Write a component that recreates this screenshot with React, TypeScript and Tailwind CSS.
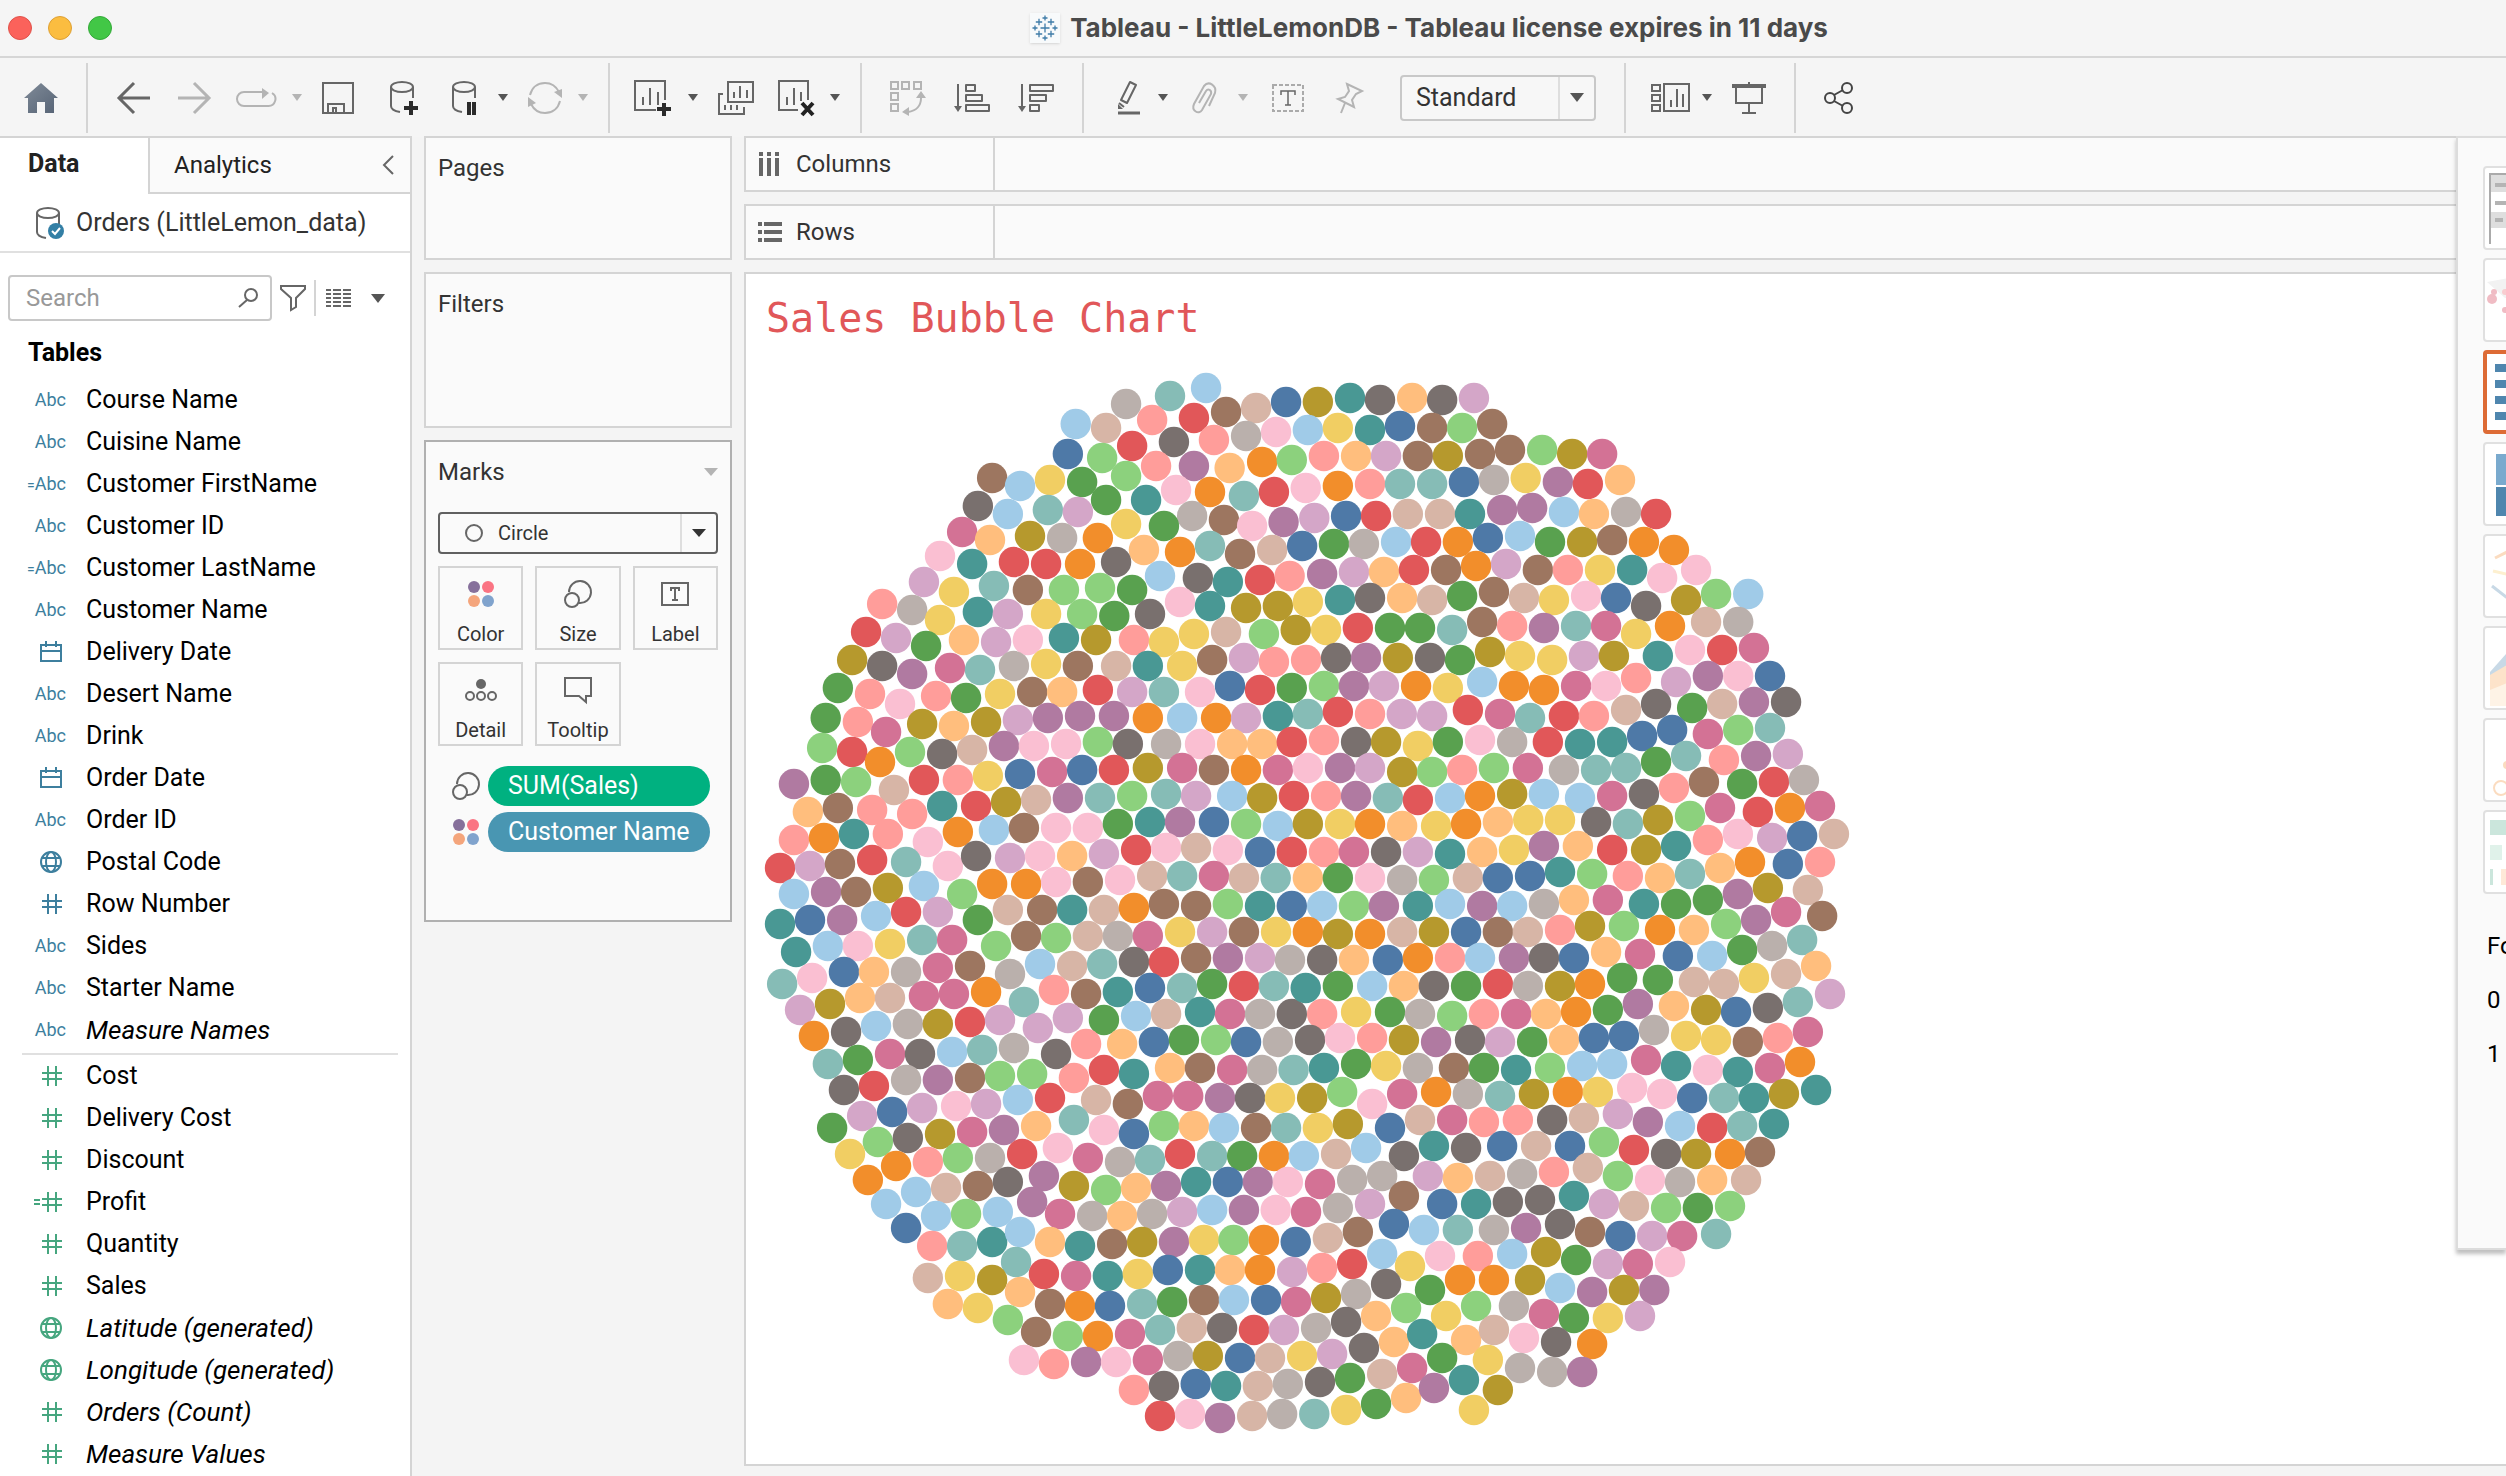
import React from "react";

const palette: Record<string, string> = {
  a: "#4e79a7", b: "#a0cbe8", c: "#f28e2b", d: "#ffbe7d", e: "#59a14f",
  f: "#8cd17d", g: "#b6992d", h: "#f1ce63", i: "#499894", j: "#86bcb6",
  k: "#e15759", l: "#ff9d9a", m: "#79706e", n: "#bab0ac", o: "#d37295",
  p: "#fabfd2", q: "#b07aa1", r: "#d4a6c8", s: "#9d7660", t: "#d7b5a6",
};

/* Bubble marks, one block per region of the view: a palette letter followed by x,y in block units. */
const blocks = [
  {
    x: 0, y: 0,
    marks: `b1305,114 j1204,138 n1081,162 l1154,210 k1271,204 s1361,186 t1445,174 a1529,156 b940,222 t1025,234
p1501,246 n1417,258 l1327,270 m1215,276 k1098,288 a918,312 f1014,324 l1165,348 q1271,348 d1371,354 c1462,336 f1545,330
s706,384 b784,408 h868,390 e958,396 f1081,378 p1221,420 c1316,426 j1411,438 k1495,426
m666,468 b750,492 j862,480 r946,486 e1025,450 i1137,450 n1266,498 s1355,510 p1434,528 q1522,516
o622,546 d700,570 g812,558 n902,564 c1002,564 h1081,522 e1187,528 d1131,600 c1232,606 j1316,588 s1400,612 t1490,600
p560,618 i650,642 k767,636 k857,642 c952,642 m1053,636 b1176,678 m1282,684 i1366,696 k1456,690 l1539,678
r515,696 h599,726 j711,708 s806,720 f907,720 f1008,714 e1098,720 p1232,756 i1316,768 g1417,774 g1506,768
l398,762 n482,780 h560,810 i666,786 r750,792 h857,792 f958,792 e1048,798 m1148,792
k353,846 r437,864 e521,888 d627,870 r717,876 p806,870 i907,864 g997,870 l1103,870 h1187,876 h1271,852 t1361,846 f1467,852 g1556,840
g314,930 m398,948 q482,972 o588,954 j672,960 n767,948 h857,942 s946,948 t1053,948 i1142,948 h1238,948 s1322,930 r1411,924 l1495,936
e274,1014 l364,1032 p448,1062 l549,1038 e633,1044 h728,1032 s818,1026 d902,1026 k1002,1020 r1098,1026 j1187,1026 p1288,1026 a1372,1008 k1456,1020 e1545,1014`,
  },
  {
    x: 560, y: 0,
    marks: `g50,156 i140,144 m224,150 d314,144 m398,150 r487,144
b22,240 h106,234 i196,240 a280,228 s370,234 f454,234 s538,222
l67,318 d157,318 r241,318 s330,318 g414,318 s504,312 s588,300 f678,300 g762,312 o846,312
p16,414 c106,408 l196,402 j280,402 j370,402 a459,396 n543,390 h632,384 q722,396 k806,402 d896,390
r40,504 a129,498 k213,498 t302,492 t392,492 i476,492 q566,480 q650,474 b739,486 d823,492 n913,486 k997,492
a6,588 e95,582 n179,582 b269,576 k353,576 c442,576 a526,564 b616,558 e700,576 g790,576 s874,570 c963,576 c1047,600
q62,672 r151,666 d235,666 k319,660 s409,660 c493,648 r577,642 s666,660 l750,660 h840,660 i930,660 p1014,684 p1109,660
h22,756 i112,750 m196,744 d286,744 t370,750 e454,738 s543,726 t627,744 h711,750 p801,738 a885,744 m969,768 g1081,750 f1165,732 b1255,732
h73,840 k162,834 e252,834 e336,834 j426,840 s510,816 l594,828 q683,834 j773,828 o857,828 h941,852 c1036,828 t1137,816 n1227,816
l17,930 m101,924 q185,924 g274,924 m364,924 e448,930 g532,906 h616,918 h706,930 r795,918 g879,918 i1002,918 p1092,900 k1182,900 o1271,894
f67,1008 q151,1008 r235,1008 c325,1008 h414,1014 b510,996 c599,1008 c683,1020 o773,1008 p857,1008 l941,984 r1053,996 q1142,978 p1227,978 a1316,978
m1361,1056 q1271,1056 t1182,1062 e1098,1074 m997,1062 t913,1080
j22,1092 k106,1086 l196,1092 r285,1092 r370,1098 k470,1080 o560,1092 j644,1104 k739,1098 l823,1098`,
  },
  {
    x: 0, y: 350,
    marks: `e240,54 l330,66 o409,96 g510,72 d599,78 g689,66 r778,60 q862,54 q952,48 q1047,48 c1142,54 b1238,54 c1333,54 r1417,54 i1506,48
f230,144 k314,156 c392,186 f476,156 m566,162 t650,150 q739,138 p823,138 p913,132 f1002,126 m1086,132 n1193,132 p1288,132 d1378,132 d1462,132 k1545,126
q151,252 e240,240 f325,246 t431,270 k515,240 l610,240 h694,228 a784,222 o874,216 a958,210 k1047,210 g1142,204 o1238,204 s1327,210 c1417,210 o1506,210
d190,336 s274,324 l370,330 l482,342 i566,318 k661,318 g745,306 t829,300 q918,294 j1008,294 f1098,288 j1193,282 r1277,288 b1378,288 g1462,294 k1551,288
l151,420 c235,414 i319,402 l414,402 p526,426 c610,396 b711,390 s795,384 p885,384 p974,384 e1058,372 i1148,366 q1232,366 a1327,366 f1417,372 b1506,378
k112,504 r196,498 s280,492 k370,480 j465,486 p582,498 m661,468 r756,474 p840,468 d930,468 r1019,462 k1109,450 p1193,444 t1277,444 p1366,450 a1456,456 k1545,456
b151,582 q241,576 s325,576 g414,564 b515,558 f622,582 c706,552 c801,552 p885,546 s974,546 p1064,540 t1154,528 j1238,528 o1327,528 t1411,534 j1500,534
i112,672 a196,660 q286,660 b381,648 k465,636 r554,636 e666,660 t750,630 s846,630 i930,630 t1019,630 c1103,624 s1187,612 s1277,618 f1366,612 i1456,618 a1545,618
i157,756 b246,738 p330,738 h420,732 j510,720 o594,720 f717,738 s801,708 f885,714 t974,708 n1058,708 o1142,708 h1232,696 r1322,696 s1411,696 h1501,696
j118,852 p202,834 a291,816 d375,816 n465,816 o554,804 s644,798 n756,822 b840,792 t930,798 j1014,792 m1103,786 k1187,786 s1277,774 q1366,774 r1456,774 n1540,780
r168,930 g252,912 d336,894 t420,894 o515,888 o599,882 c689,876 j795,906 l879,870 s969,882 i1058,876 a1148,864 j1238,864 e1322,852 k1411,858 j1495,858
c207,1008 m297,996 b381,978 n470,972 g554,972 k644,966 r728,960 r834,984 r918,954 e1019,960 b1109,948 t1193,942 i1288,936 o1372,942 n1456,942 m1545,942
j246,1092 e330,1080 o420,1062 m504,1062 b594,1056 j678,1050 n767,1044 m885,1062 l969,1032 d1070,1032 a1159,1026 e1243,1020 f1333,1020 a1417,1026 n1506,1026`,
  },
  {
    x: 560, y: 350,
    marks: `l67,120 m157,126 g241,126 h330,138 e414,126 p504,120 n594,126 k694,126 i784,132 i874,126 a958,108 a1042,90 o1142,102 f1227,90 j1316,84
p22,204 q112,204 r196,204 g286,216 f370,216 l454,210 f543,204 o638,204 n739,210 j829,210 j913,204 e997,186 j1081,168 l1187,180 q1277,168 r1366,162
l73,288 q157,288 j246,294 k330,300 b420,294 c504,288 g594,282 b683,282 b784,294 o874,288 m963,282 l1047,264 s1131,246 e1238,252 k1327,246 n1411,240
g22,372 h112,372 c196,372 d286,378 h381,378 c465,372 d554,366 h639,360 h728,360 m829,366 j918,372 g1002,360 f1092,348 o1176,324 k1282,336 c1372,324 o1456,318
l67,456 o151,456 m241,456 r330,456 i420,462 d510,456 h599,450 q683,438 d778,438 k874,450 g969,450 i1053,438 l1142,420 p1226,402 r1322,414 a1406,408 t1495,402
d22,534 e106,534 p196,534 n286,540 f375,540 t470,534 a554,534 a644,528 i728,516 f818,522 l918,528 d1008,534 j1092,522 d1176,504 c1260,486 a1366,492 l1456,486
b62,618 f151,618 q235,618 i330,618 b420,612 q510,618 b594,618 n683,612 d767,600 o862,600 i963,612 e1053,612 e1142,600 q1226,582 g1310,564 t1422,570
c22,696 g106,702 c196,702 t286,696 g375,696 a465,696 s554,696 t638,696 l728,690 g812,678 f907,678 c1008,690 d1103,690 f1193,672 q1277,660 o1361,636 s1462,648
m62,780 d151,780 a246,780 c330,774 l420,774 b504,774 q599,774 m683,774 a767,774 d857,756 o952,762 a1058,768 b1154,768 e1238,750 n1322,738 j1406,720
i16,864 e106,858 b202,858 d291,858 m375,858 e465,858 k554,852 n638,858 g728,858 c812,852 e902,834 e1002,840 t1103,846 t1187,852 h1271,834 t1361,822 d1445,798
l62,942 h157,936 e252,936 n336,942 f426,948 l515,942 o605,942 d689,942 c773,936 e862,930 q946,912 d1047,918 g1137,930 a1221,936 m1310,924 j1394,906 r1484,882
m28,1020 p112,1014 l202,1014 g291,1020 q381,1026 m476,1020 r560,1026 e650,1026 d739,1020 a823,1014 a907,1008 n991,990 h1081,1008 h1165,1020 s1254,1026 l1338,1014 o1422,996
i67,1104 e157,1092 h241,1098 n330,1104 s431,1104 e515,1104 i605,1110 f700,1104 b790,1098 b874,1092 o969,1080 i1053,1098 p1142,1110 i1226,1116 o1316,1104 c1400,1086`,
  },
  {
    x: 0, y: 710,
    marks: `k1019,30 i1103,42 l935,54 d1204,24 s1288,24 o1378,30 n1462,30 j1550,30
m291,90 k375,78 n465,60 q554,60 s644,54 f728,48 f818,42
r342,168 a426,156 r510,144 p605,138 r689,132 b778,120 k868,114 t997,120 s1086,132 o1170,108 o1255,108 q1344,114 m1428,114 h1512,114
e258,204 f386,246 m470,234 g560,222 o650,216 q739,210 d829,198 j935,180 p1019,210 a1103,222 f1187,198 d1271,198 b1355,204 s1445,204 j1529,204
h308,282 c437,318 l526,306 f610,294 n700,294 k790,282 p890,264 o974,294 n1064,306 j1148,300 k1232,282 j1322,288 e1406,288 c1495,288
c358,360 b493,396 t577,384 s666,378 m750,366 q851,348 g935,378 f1025,390 d1109,384 q1193,378 i1277,366 a1366,366 q1450,366 p1534,366
b409,432 b549,468 f633,462 b722,456 q818,426 o896,462 n986,468 d1070,468 n1154,462 r1238,456 b1322,450 q1411,450 p1500,450
a465,504 l538,558 j622,558 i706,546 b784,516 d868,546 i952,558 s1042,552 g1126,546 q1215,546 h1299,540 f1382,540 c1467,540 a1556,546
j773,606 t526,654 h616,648 g706,660 k851,642 o941,648 i1030,648 h1114,642 a1198,630 i1288,630 d1372,630 c1456,630 r1546,636
d582,732 h666,744 d784,696 s868,732 c952,738 a1036,738 j1126,732 e1210,726 s1299,720 b1383,720 a1473,720 o1557,726
f750,780 s829,816 f918,828 c1002,828 o1092,822 j1176,810 t1265,804 m1350,804 k1439,810 r1523,810
p795,900 l879,912 q969,906 p1053,906 o1142,900 n1227,888 g1310,888 a1400,894 t1484,894 h1574,888
l1103,990 m1187,978 a1276,972 i1361,978 t1450,978 n1534,972
k1176,1068 p1260,1062 q1344,1074 t1434,1068 n1518,1062`,
  },
  {
    x: 560, y: 710,
    marks: `g34,114 f118,96 p202,132 o286,102 c381,96 n470,102 j560,108 g655,102 c750,96 h834,96 p930,84 p1014,102 a1098,114 j1187,114 i1271,114 g1355,102 i1445,90
h50,204 g134,192 a252,204 t336,180 o426,180 l515,186 l610,180 m706,180 t795,174 r890,162 q974,186 b1064,198 k1154,204 j1238,198 i1327,192
b11,288 t101,282 b185,264 m291,288 i375,258 m465,264 a566,258 t661,258 a756,258 f851,246 k935,270 m1025,282 g1109,282 c1204,282 s1288,276
o56,372 n146,360 n230,348 r358,348 d442,354 t532,348 n622,342 l711,336 t806,324 f890,348 p980,360 n1064,366 d1154,360 t1249,360
o17,456 n106,444 r196,432 s291,408 a398,432 i493,432 m582,426 m672,420 i767,408 r851,432 t935,438 f1025,444 e1114,444 f1204,438
t78,534 s162,516 a263,492 b347,510 j442,510 n543,510 q633,504 m728,492 s812,516 a897,528 r986,528 o1070,528 j1165,522
l62,624 k146,612 b230,582 h308,618 p392,588 l498,588 b594,582 g689,576 e773,600 r862,612 o946,612 p1036,606
g73,714 n157,702 m241,672 e364,690 c448,660 c543,660 g644,660 b728,684 q818,696 g907,690 q992,690
n45,804 m129,786 d213,768 f297,744 h409,768 f493,738 n599,738 o683,762 e767,774 h862,774 r952,768
r90,882 m179,864 d263,846 i342,822 d465,840 t543,810 p627,834 m717,846 c818,852
m56,966 e140,954 t230,942 o314,924 e398,894 h526,900 n616,924 n706,936 q790,936
j40,1062 h129,1050 e213,1032 d297,1014 q375,984 i459,960 g554,990 h487,1050`,
  },
];

function BubbleChart() {
  return (
    <svg width="1120" height="1100" viewBox="0 0 1120 1100" role="img" aria-label="Sales by customer">
      {blocks.map((block, n) =>
        block.marks.split(/\s+/).map((mark, k) => {
          const [mx, my] = mark.slice(1).split(",").map(Number);
          return (
            <circle key={`${n}-${k}`} cx={block.x + mx / 2.8} cy={block.y + my / 3} r="15.2" fill={palette[mark[0]]} />
          );
        })
      )}
    </svg>
  );
}

type SvgProps = { w: number; h: number; color?: string; sw?: number; children: React.ReactNode };
function Svg({ w, h, color = "#666666", sw = 2, children }: SvgProps) {
  return (
    <svg width={w} height={h} viewBox={`0 0 ${w} ${h}`} fill="none" stroke={color} strokeWidth={sw} className="shrink-0 overflow-visible" aria-hidden="true">
      {children}
    </svg>
  );
}

const GRAY = "#b4b4b4";

function Tool({ label, className, children }: { label: string; className: string; children: React.ReactNode }) {
  return (
    <button type="button" aria-label={label} className={`flex shrink-0 items-center justify-center ${className}`}>
      {children}
    </button>
  );
}

function Caret({ w = 10, h = 7, color = "#555555" }: { w?: number; h?: number; color?: string }) {
  return (
    <svg width={w} height={h} viewBox="0 0 10 7" preserveAspectRatio="none" className="shrink-0" aria-hidden="true">
      <path d="M0 0H10L5 7Z" fill={color} />
    </svg>
  );
}

function Sep({ className }: { className: string }) {
  return <span className={`h-[70px] w-0.5 shrink-0 bg-[#d4d4d4] ${className}`} />;
}

const cylinder = (
  <>
    <ellipse cx="12" cy="6" rx="11" ry="5" />
    <path d="M1 6V25C1 28 4 30 10 31M23 6V17" />
  </>
);

function Toolbar() {
  return (
    <div className="flex h-[79px] items-center bg-[#f5f5f5]" role="toolbar" aria-label="Main toolbar">
      <Tool label="Home" className="ml-6">
        <svg width="34" height="30" viewBox="0 0 34 30" aria-hidden="true">
          <defs>
            <linearGradient id="homeFill" x1="0" y1="0" x2="1" y2="1">
              <stop offset="0" stopColor="#808b98" />
              <stop offset="1" stopColor="#566375" />
            </linearGradient>
          </defs>
          <path d="M17 0L34 15H30V30H21V19H13V30H4V15H0Z" fill="url(#homeFill)" />
        </svg>
      </Tool>
      <Sep className="ml-7" />
      <Tool label="Back" className="ml-7">
        <Svg w={34} h={32} sw={3}><path d="M18 1L3 16L18 31M3 16H34" /></Svg>
      </Tool>
      <Tool label="Forward" className="ml-7">
        <Svg w={34} h={32} sw={3} color={GRAY}><path d="M16 1L31 16L16 31M31 16H0" /></Svg>
      </Tool>
      <Tool label="Redo" className="ml-6">
        <Svg w={40} h={20} color={GRAY}>
          <path d="M26 4H8A7 7 0 0 0 8 18H32A7 7 0 0 0 36 5" />
          <path d="M26 0L33 5L26 11Z" fill={GRAY} stroke="none" />
        </Svg>
      </Tool>
      <Tool label="Redo options" className="ml-4"><Caret color={GRAY} /></Tool>
      <Tool label="Save" className="ml-5">
        <Svg w={32} h={32}><path d="M1 1H31V31H1ZM6 31V22H22V31M11 31V26H14V31" /></Svg>
      </Tool>
      <Tool label="New data source" className="ml-9">
        <Svg w={30} h={34}>{cylinder}<path d="M21 20V34M14 27H28" stroke="#2b2b2b" strokeWidth="4" /></Svg>
      </Tool>
      <Tool label="Pause auto updates" className="ml-8">
        <Svg w={26} h={34}>{cylinder}<path d="M17 21V34M22 21V34" stroke="#2b2b2b" strokeWidth="4" /></Svg>
      </Tool>
      <Tool label="Pause options" className="ml-5"><Caret /></Tool>
      <Tool label="Refresh" className="ml-5">
        <Svg w={34} h={32} color={GRAY}>
          <path d="M2 13C4 5 10 1 17 1C23 1 28 4 31 10M32 19C30 27 24 31 17 31C11 31 6 28 3 22" />
          <path d="M26 10L34 7V16ZM0 15L8 21L0 25Z" fill={GRAY} stroke="none" />
        </Svg>
      </Tool>
      <Tool label="Refresh options" className="ml-4"><Caret color={GRAY} /></Tool>
      <Sep className="ml-5" />
      <Tool label="New worksheet" className="ml-6">
        <Svg w={38} h={36}>
          <path d="M22 30H1V1H31V20M9 25V17M16 25V8M24 25V12" />
          <path d="M30 23V36M23 29H37" stroke="#2b2b2b" strokeWidth="4" />
        </Svg>
      </Tool>
      <Tool label="New worksheet options" className="ml-4"><Caret /></Tool>
      <Tool label="Duplicate" className="ml-5">
        <Svg w={36} h={34}>
          <path d="M10 1H35V21H10ZM16 17V11M22 17V5M29 17V9M5 13H1V33H26V26M7 29V24M13 29V24M19 29V24" />
        </Svg>
      </Tool>
      <Tool label="Clear sheet" className="ml-6">
        <Svg w={36} h={36}>
          <path d="M20 30H1V1H30V20M9 25V17M16 25V8M23 21V12" />
          <path d="M24 23L35 35M35 23L24 35" stroke="#222222" strokeWidth="4" />
        </Svg>
      </Tool>
      <Tool label="Clear options" className="ml-4"><Caret /></Tool>
      <Sep className="ml-5" />
      <Tool label="Swap rows and columns" className="ml-7">
        <Svg w={36} h={36} color={GRAY}>
          <path d="M1 2H8V9H1ZM12 2H19V9H12ZM24 2H31V9H24ZM1 13H8V20H1ZM1 24H8V31H1ZM31 18C31 26 26 31 18 32" />
          <path d="M26 18L31 11L36 18ZM19 27V36L12 32Z" fill={GRAY} stroke="none" />
        </Svg>
      </Tool>
      <Tool label="Sort ascending" className="ml-7">
        <Svg w={36} h={28}>
          <path d="M4 0V24M12 1H21V7H12ZM12 11H28V17H12ZM12 21H35V27H12Z" strokeLinejoin="round" />
          <path d="M0 22H8L4 28Z" fill="#666666" stroke="none" />
        </Svg>
      </Tool>
      <Tool label="Sort descending" className="ml-7">
        <Svg w={36} h={28}>
          <path d="M4 0V24M12 1H35V7H12ZM12 11H28V17H12ZM12 21H21V27H12Z" strokeLinejoin="round" />
          <path d="M0 22H8L4 28Z" fill="#666666" stroke="none" />
        </Svg>
      </Tool>
      <Sep className="ml-7" />
      <Tool label="Highlight" className="ml-8">
        <Svg w={26} h={34}>
          <path d="M14 1L20 4L11 22L5 19ZM3 22L8 26" strokeLinejoin="round" />
          <path d="M2 23L7 28H2Z" fill="#666666" stroke="none" />
          <path d="M2 32H24" strokeWidth="3" />
        </Svg>
      </Tool>
      <Tool label="Highlight options" className="ml-4"><Caret /></Tool>
      <Tool label="Group members" className="ml-6">
        <Svg w={26} h={32} color={GRAY}>
          <path d="M17 24L23 11C25 4 17 -2 12 4L2 22C-1 29 7 33 10 28L19 12C20 8 16 6 14 9L7 21" />
        </Svg>
      </Tool>
      <Tool label="Group options" className="ml-5"><Caret color={GRAY} /></Tool>
      <Tool label="Show mark labels" className="ml-6">
        <Svg w={32} h={28} color="#aaaaaa">
          <rect x="1" y="1" width="30" height="26" strokeDasharray="4 2" />
          <path d="M9 11V7H23V11M16 7V21M13 21H19" stroke="#666666" strokeWidth="1.5" />
        </Svg>
      </Tool>
      <Tool label="Fix axes" className="ml-8">
        <Svg w={28} h={32} color={GRAY}>
          <path d="M11 2L26 9L20 12L16 18L18 25L2 17L9 15L13 9ZM9 21L5 31" />
        </Svg>
      </Tool>
      <div className="relative ml-9 h-[46px] w-[196px] shrink-0">
        <select aria-label="Fit" className="h-full w-full appearance-none rounded-sm border-2 border-[#c8c8c8] bg-[#f7f7f7] pl-3.5 text-[25px] text-[#333333]">
          <option>Standard</option>
        </select>
        <span className="pointer-events-none absolute inset-y-0.5 right-0.5 flex w-9 items-center justify-center border-l-2 border-[#dedede]">
          <Caret w={14} h={9} />
        </span>
      </div>
      <Sep className="ml-7" />
      <Tool label="Show cards" className="ml-6">
        <Svg w={40} h={30}>
          <path d="M2 2H10V8H2ZM2 12H10V18H2ZM2 22H10V28H2ZM14 1H39V28H14ZM21 24V17M27 24V6M33 24V11" />
        </Svg>
      </Tool>
      <Tool label="Card options" className="ml-3"><Caret /></Tool>
      <Tool label="Presentation mode" className="ml-5">
        <Svg w={34} h={32}>
          <path d="M17 0V3M4 5V21H30V5M17 21V31M10 31H24" />
          <path d="M0 4H34" strokeWidth="4" />
        </Svg>
      </Tool>
      <Sep className="ml-7" />
      <Tool label="Share" className="ml-7">
        <Svg w={30} h={32} color="#444444">
          <circle cx="6" cy="16" r="5" /><circle cx="23" cy="6" r="5" /><circle cx="23" cy="26" r="5" />
          <path d="M10 13L19 8M10 19L19 24" />
        </Svg>
      </Tool>
    </div>
  );
}

function PlusMark({ x, y, s }: { x: number; y: number; s: number }) {
  return <path d={`M${x - s} ${y}H${x + s}M${x} ${y - s}V${y + s}`} />;
}

function TitleBar() {
  return (
    <header className="flex h-[58px] items-center border-b-2 border-[#d6d6d6] bg-[#f5f5f5] pl-2">
      <div className="mr-[344px] flex flex-1 gap-4">
        <button type="button" aria-label="Close" className="size-6 rounded-full border border-[#e0524a] bg-[#fb625b]" />
        <button type="button" aria-label="Minimize" className="size-6 rounded-full border border-[#dea034] bg-[#fbbd40]" />
        <button type="button" aria-label="Zoom" className="size-6 rounded-full border border-[#33a938] bg-[#42c746]" />
      </div>
      <h1 className="flex items-center gap-2.5 font-['Inter'] text-[26px] leading-9 font-bold whitespace-nowrap text-[#4a4a4a]">
        <svg width="30" height="30" viewBox="0 0 30 30" className="bg-[#f8fafb] shadow" stroke="#3f7ca8" strokeWidth="1.3" aria-hidden="true">
          <PlusMark x={15} y={15} s={4.5} />
          <PlusMark x={15} y={5} s={2.5} />
          <PlusMark x={15} y={25} s={2.5} />
          <PlusMark x={5} y={15} s={2.5} />
          <PlusMark x={25} y={15} s={2.5} />
          <PlusMark x={9} y={9} s={3.2} />
          <PlusMark x={21} y={9} s={3.2} />
          <PlusMark x={9} y={21} s={3.2} />
          <PlusMark x={21} y={21} s={3.2} />
        </svg>
        Tableau - LittleLemonDB - Tableau license expires in 11 days
      </h1>
      <div className="flex-1" />
    </header>
  );
}

type Field = { name: string; kind: "abc" | "date" | "geo" | "num"; calc?: boolean; italic?: boolean };
const dimensions: Field[] = [
  { name: "Course Name", kind: "abc" },
  { name: "Cuisine Name", kind: "abc" },
  { name: "Customer FirstName", kind: "abc", calc: true },
  { name: "Customer ID", kind: "abc" },
  { name: "Customer LastName", kind: "abc", calc: true },
  { name: "Customer Name", kind: "abc" },
  { name: "Delivery Date", kind: "date" },
  { name: "Desert Name", kind: "abc" },
  { name: "Drink", kind: "abc" },
  { name: "Order Date", kind: "date" },
  { name: "Order ID", kind: "abc" },
  { name: "Postal Code", kind: "geo" },
  { name: "Row Number", kind: "num" },
  { name: "Sides", kind: "abc" },
  { name: "Starter Name", kind: "abc" },
  { name: "Measure Names", kind: "abc", italic: true },
];
const measures: Field[] = [
  { name: "Cost", kind: "num" },
  { name: "Delivery Cost", kind: "num" },
  { name: "Discount", kind: "num" },
  { name: "Profit", kind: "num", calc: true },
  { name: "Quantity", kind: "num" },
  { name: "Sales", kind: "num" },
  { name: "Latitude (generated)", kind: "geo", italic: true },
  { name: "Longitude (generated)", kind: "geo", italic: true },
  { name: "Orders (Count)", kind: "num", italic: true },
  { name: "Measure Values", kind: "num", italic: true },
];

function FieldIcon({ kind, calc, color }: { kind: Field["kind"]; calc?: boolean; color: string }) {
  if (kind === "abc")
    return (
      <span className="text-lg text-[#3d7f9e]">
        {calc && <span className="text-sm">=</span>}Abc
      </span>
    );
  if (kind === "date")
    return (
      <span className="mr-1">
        <Svg w={22} h={22} color={color}><path d="M1 4H21V20H1ZM1 10H21M6 0V6M16 0V6" /></Svg>
      </span>
    );
  if (kind === "geo")
    return (
      <span className="mr-1">
        <Svg w={22} h={22} color={color}>
          <circle cx="11" cy="11" r="10" /><ellipse cx="11" cy="11" rx="5" ry="10" /><path d="M2 7H20M2 15H20" />
        </Svg>
      </span>
    );
  return (
    <span className="mr-1">
      <Svg w={calc ? 28 : 20} h={20} color={color}>
        <g transform={calc ? "translate(8 0)" : undefined}><path d="M6 0V20M14 0V20M0 7H20M0 13H20" /></g>
        {calc && <path d="M0 8H6M0 12H6" />}
      </Svg>
    </span>
  );
}

function FieldList({ fields, color, label }: { fields: Field[]; color: string; label: string }) {
  return (
    <ul aria-label={label}>
      {fields.map((f) => (
        <li key={f.name} className="flex h-[42px] items-center gap-5 leading-8 text-black">
          <span className="flex w-[66px] shrink-0 justify-end">
            <FieldIcon kind={f.kind} calc={f.calc} color={color} />
          </span>
          <span className={f.italic ? "text-[26px] italic" : "text-[25px]"}>{f.name}</span>
        </li>
      ))}
    </ul>
  );
}

function DataPane() {
  return (
    <aside className="flex w-[412px] shrink-0 flex-col border-t-2 border-r-2 border-[#d4d4d4] bg-white">
      <div role="tablist" className="flex h-14 text-[#222222]">
        <button role="tab" aria-selected="true" className="w-[148px] pb-1 pl-7 text-left text-[25px] font-bold">Data</button>
        <button role="tab" aria-selected="false" className="flex flex-1 items-center justify-between border-b-2 border-l-2 border-[#d4d4d4] bg-[#fafafa] pr-4 pl-6 text-2xl">
          Analytics
          <Svg w={12} h={18}><path d="M11 0L2 9L11 18" /></Svg>
        </button>
      </div>
      <button type="button" className="flex h-[59px] items-center gap-3 border-b-2 border-[#e0e0e0] pl-9 text-[25px] leading-8 whitespace-nowrap text-[#333333]">
        <Svg w={28} h={32}>
          {cylinder}
          <circle cx="20" cy="24" r="8" fill="#337fa5" stroke="none" />
          <path d="M16 24L19 27L24 21" stroke="#ffffff" />
        </Svg>
        Orders (LittleLemon_data)
      </button>
      <div className="mt-5.5 flex items-center pl-2">
        <label className="relative block w-[264px]">
          <input type="text" aria-label="Search fields" placeholder="Search" className="h-[46px] w-full rounded-sm border-2 border-[#c8c8c8] bg-white pl-4 text-2xl placeholder:text-[#999999]" />
          <span className="pointer-events-none absolute inset-y-0 right-3.5 flex items-center">
            <Svg w={20} h={20}><circle cx="13" cy="7" r="6" /><path d="M9 12L1 19" /></Svg>
          </span>
        </label>
        <button type="button" aria-label="Filter fields" className="ml-2">
          <Svg w={26} h={26}><path d="M1 1H25V4L16 13V22L11 25V13L1 4Z" /></Svg>
        </button>
        <span className="ml-2 h-9 w-0.5 bg-[#d4d4d4]" />
        <button type="button" aria-label="View options" className="ml-2.5 flex items-center gap-5">
          <Svg w={25} h={20} sw={2}>
            <path d="M0 2H25M0 6H25M0 10H25M0 14H25M0 18H25" strokeDasharray="5 2 8 2 8" />
          </Svg>
          <Caret w={14} h={9} />
        </button>
      </div>
      <h2 className="mt-3 mb-1.5 pl-7 text-[25px] leading-10 font-bold text-black">Tables</h2>
      <FieldList fields={dimensions} color="#3d7f9e" label="Dimensions" />
      <hr className="mt-0.5 mr-3 ml-[22px] border-t-2 border-[#e0e0e0]" />
      <FieldList fields={measures} color="#46a67f" label="Measures" />
    </aside>
  );
}

function SizeIcon() {
  return (
    <Svg w={28} h={28}>
      <path d="M5 12A11 11 0 1 1 15 23" />
      <circle cx="8" cy="20" r="7" />
    </Svg>
  );
}
function ColorIcon() {
  return (
    <svg width="28" height="28" viewBox="0 0 28 28" className="shrink-0" aria-hidden="true">
      <circle cx="7" cy="7" r="6" fill="#86709b" /><circle cx="21" cy="7" r="6" fill="#fa7483" />
      <circle cx="7" cy="21" r="6" fill="#f4a57c" /><circle cx="21" cy="21" r="6" fill="#80a3cd" />
    </svg>
  );
}

function MarkButton({ label, children }: { label: string; children: React.ReactNode }) {
  return (
    <button type="button" className="flex h-[84px] flex-col items-center justify-between border-2 border-[#d4d4d4] bg-[#fafafa] pt-3 text-xl text-[#333333]">
      {children}
      {label}
    </button>
  );
}

function Cards() {
  return (
    <section className="ml-3 flex w-[308px] shrink-0 flex-col gap-3 text-2xl text-[#333333]">
      <div className="h-[124px] border-2 border-[#d4d4d4] bg-[#fafafa] px-3 py-3.5">
        <h2>Pages</h2>
      </div>
      <div className="h-[156px] border-2 border-[#d4d4d4] bg-[#fafafa] px-3 py-3.5">
        <h2>Filters</h2>
      </div>
      <div className="h-[482px] border-2 border-[#b0b0b0] bg-[#fafafa] px-3 py-3.5">
        <div className="flex items-center justify-between">
          <h2>Marks</h2>
          <Caret w={14} h={8} color={GRAY} />
        </div>
        <div className="relative mt-6 h-[42px]">
          <select aria-label="Mark type" className="h-full w-full appearance-none rounded-sm border-2 border-[#606060] bg-[#fafafa] pl-[58px] text-xl">
            <option>Circle</option>
          </select>
          <span className="pointer-events-none absolute inset-y-0 left-7 flex items-center">
            <Svg w={18} h={18}><circle cx="8" cy="9" r="8" /></Svg>
          </span>
          <span className="pointer-events-none absolute inset-y-0.5 right-0.5 flex w-9 items-center justify-center border-l-2 border-[#dedede]">
            <Caret w={14} h={8} color="#333333" />
          </span>
        </div>
        <div className="mt-3 grid grid-cols-3 gap-3">
          <MarkButton label="Color"><ColorIcon /></MarkButton>
          <MarkButton label="Size"><SizeIcon /></MarkButton>
          <MarkButton label="Label">
            <Svg w={28} h={28}>
              <rect x="1" y="3" width="26" height="22" />
              <path d="M10 11V8H18V11M14 8V20M11 20H17" />
            </Svg>
          </MarkButton>
          <MarkButton label="Detail">
            <Svg w={32} h={28}>
              <circle cx="16" cy="8" r="5" fill="#666666" stroke="none" />
              <circle cx="5" cy="20" r="4" /><circle cx="16" cy="20" r="4" /><circle cx="27" cy="20" r="4" />
            </Svg>
          </MarkButton>
          <MarkButton label="Tooltip">
            <Svg w={28} h={28}><path d="M1 2H27V20H22V26L15 20H1Z" /></Svg>
          </MarkButton>
        </div>
        <ul className="mt-5 flex flex-col gap-1.5 pr-2 text-[25px]">
          <li className="flex items-center gap-2 pl-3.5">
            <SizeIcon />
            <span className="flex h-10 flex-1 items-center rounded-full bg-[#00b180] pl-5 text-white">SUM(Sales)</span>
          </li>
          <li className="flex items-center gap-2 pl-3.5">
            <ColorIcon />
            <span className="flex h-10 flex-1 items-center rounded-full bg-[#4996b2] pl-5 whitespace-nowrap text-white">Customer Name</span>
          </li>
        </ul>
      </div>
    </section>
  );
}

function Shelf({ label, children }: { label: string; children: React.ReactNode }) {
  return (
    <div className="flex h-14 border-2 border-r-0 border-[#d4d4d4] bg-[#fafafa] text-2xl text-[#333333]">
      <div className="flex w-[249px] items-center border-r-2 border-[#d4d4d4] pl-3">
        <span className="flex w-[38px]">{children}</span>
        {label}
      </div>
    </div>
  );
}

function View() {
  return (
    <main className="ml-3 flex min-w-0 flex-1 flex-col gap-3 pb-2.5">
      <Shelf label="Columns">
        <Svg w={22} h={24} sw={4}><path d="M3 0V4M11 0V4M19 0V4M3 6V24M11 6V24M19 6V24" /></Svg>
      </Shelf>
      <Shelf label="Rows">
        <Svg w={24} h={20} sw={4}><path d="M0 2H4M0 10H4M0 18H4M6 2H24M6 10H24M6 18H24" /></Svg>
      </Shelf>
      <div className="flex-1 border-2 border-r-0 border-[#d4d4d4] bg-white pt-4">
        <h2 className="mb-1 pl-5 font-['DejaVu_Sans_Mono'] text-[40px] leading-[56px] text-[#e15759]">Sales Bubble Chart</h2>
        <div className="-ml-1.5 h-[1100px] w-[1120px]">
          <BubbleChart />
        </div>
      </div>
    </main>
  );
}

function Thumb({ label, selected, children }: { label: string; selected?: boolean; children: React.ReactNode }) {
  return (
    <button
      type="button"
      aria-label={label}
      className={selected ? "h-[84px] w-24 rounded-sm border-4 border-[#dd6b35] bg-white" : "h-[84px] w-24 rounded-sm border-2 border-[#e0e0e0] bg-white"}
    >
      <svg width="80" height="76" viewBox="0 0 80 76" aria-hidden="true">{children}</svg>
    </button>
  );
}

function ShowMe() {
  return (
    <aside className="absolute top-0 right-0 h-[1114px] w-[50px] overflow-hidden border-y-2 border-l-2 border-[#dcdcdc] bg-[#fafafa] pt-7 pl-[25px] text-2xl text-black shadow-[0_4px_4px_rgba(0,0,0,0.25)]">
      <div className="flex w-24 flex-col gap-2">
        <Thumb label="Text table">
          <path d="M5 74V4H80" fill="none" stroke="#aaaaaa" strokeWidth="2" />
          <path d="M6 5H80V22H6ZM6 42H80V58H6Z" fill="#dedede" />
          <path d="M10 15H80M10 33H80M10 50H18" stroke="#b4b4b4" strokeWidth="4" />
        </Thumb>
        <Thumb label="Map">
          <path d="M2 20L24 16L40 20V34L20 36Z" fill="#f2f2f2" />
          <circle cx="7" cy="37" r="5" fill="#f0bcc4" /><circle cx="9" cy="30" r="3" fill="#f0bcc4" /><circle cx="20" cy="30" r="3" fill="#f8cdd0" /><circle cx="20" cy="48" r="3" fill="#f0bcc4" />
        </Thumb>
        <Thumb label="Horizontal bars" selected>
          <path d="M8 14H80M8 30H80M8 46H80M8 62H80" stroke="#4f86ae" strokeWidth="8" />
        </Thumb>
        <Thumb label="Treemap">
          <path d="M11 8H80V39H11Z" fill="#7aaace" /><path d="M11 41H80V70H11Z" fill="#4f86ae" />
        </Thumb>
        <Thumb label="Lines">
          <path d="M10 20L30 10" stroke="#fbdcc0" strokeWidth="3" /><path d="M8 33L30 38" stroke="#fdf0d0" strokeWidth="3" /><path d="M7 48L30 66" stroke="#c8d9e6" strokeWidth="3" />
        </Thumb>
        <Thumb label="Area">
          <path d="M5 42L30 14V50H5Z" fill="#c8d9e6" /><path d="M5 45L30 30V60H5Z" fill="#fde3ca" /><path d="M5 60L30 50V76H5Z" fill="#fef3e6" />
        </Thumb>
        <Thumb label="Circle views">
          <circle cx="16" cy="66" r="7" fill="none" stroke="#fbdcc0" strokeWidth="2" /><circle cx="22" cy="43" r="4" fill="#fbdcc0" />
        </Thumb>
        <Thumb label="Highlight table">
          <path d="M5 6H30V21H5ZM5 55H8V71H5Z" fill="#cbe6dc" /><path d="M5 31H17V46H5Z" fill="#e0f2ea" /><path d="M16 55H30V71H16Z" fill="#fee9d8" />
        </Thumb>
      </div>
      <div className="mt-8 flex flex-col pl-1 leading-10">
        <p className="mb-3.5">Fo</p>
        <p className="mb-3.5">0</p>
        <p>1</p>
      </div>
    </aside>
  );
}

export default function App() {
  return (
    <div className="flex min-h-screen flex-col overflow-hidden bg-[#f4f4f4] font-['Roboto','Noto_Sans',sans-serif]">
      <TitleBar />
      <Toolbar />
      <div className="relative -mt-px flex flex-1">
        <DataPane />
        <Cards />
        <View />
        <ShowMe />
      </div>
    </div>
  );
}
